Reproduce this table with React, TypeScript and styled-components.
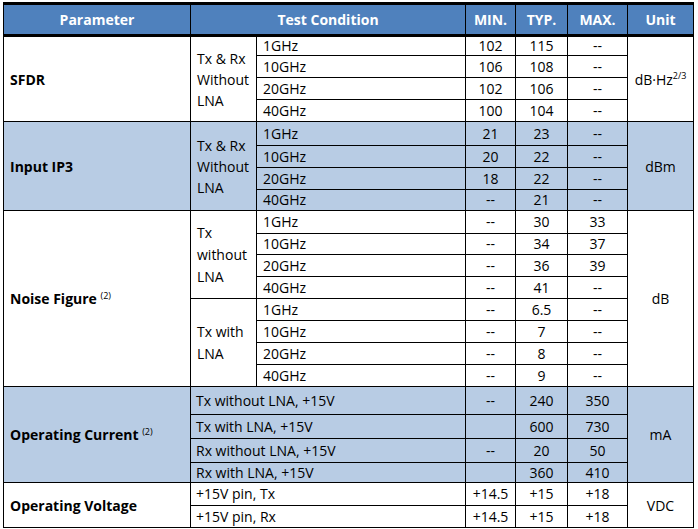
import React from "react"
import styled, { createGlobalStyle } from "styled-components"

const HEAD_BLUE = "#4f81bd"
const BAND_BLUE = "#b8cce4"

const GlobalStyle = createGlobalStyle`
  html, body {
    margin: 0;
    padding: 0;
    background: #fff;
  }
  body {
    font-family: "Open Sans", "Noto Sans", sans-serif;
    color: #000;
  }
`

const S = {
  Table: styled.table`
    margin: 2px 0 0 3px;
    width: 690px;
    table-layout: fixed;
    border-collapse: collapse;
    font-size: 14px;
    border: 1px solid #000;
    border-top: 3px solid #000;
  `,
  Row: styled.tr<{ $h: number; $band?: boolean }>`
    height: ${({ $h }) => $h}px;
    background: ${({ $band }) => ($band ? BAND_BLUE : "#fff")};
  `,
  Head: styled.th`
    background: ${HEAD_BLUE};
    color: #fff;
    font-weight: 700;
    text-align: center;
    padding: 0;
    border: 1px solid #000;
    border-top: 3px solid #000;
    border-bottom: 3px solid #000;
  `,
  Param: styled.td`
    font-weight: 700;
    text-align: left;
    padding: 0 6px;
    border: 1px solid #000;
    white-space: nowrap;
  `,
  Label: styled.td<{ $lh: number }>`
    text-align: left;
    padding: 0 6px;
    line-height: ${({ $lh }) => $lh}px;
    border: 1px solid #000;
  `,
  Freq: styled.td`
    text-align: left;
    padding: 0 6px;
    border: 1px solid #000;
    line-height: 18px;
  `,
  Cond: styled.td`
    text-align: left;
    padding: 0 5px;
    border: 1px solid #000;
    white-space: nowrap;
    line-height: 18px;
  `,
  Value: styled.td`
    text-align: center;
    padding: 0;
    border: 1px solid #000;
    line-height: 18px;
  `,
  Unit: styled.td`
    text-align: center;
    padding: 0;
    border: 1px solid #000;
  `,
  Sup: styled.sup`
    font-size: 9px;
    vertical-align: 6px;
    line-height: 0;
  `,
  Note: styled.sup`
    font-size: 9px;
    font-weight: 400;
    vertical-align: 5px;
    line-height: 0;
  `,
}

type Vals = [string, string, string]

interface FreqRow {
  f: string
  v: Vals
  h: number
}

interface FreqGroup {
  label: string[]
  lh: number
  rows: FreqRow[]
}

interface FreqSection {
  param: React.ReactNode
  unit: React.ReactNode
  band: boolean
  groups: FreqGroup[]
}

interface CondRow {
  cond: string
  v: Vals
  h: number
}

interface CondSection {
  param: React.ReactNode
  unit: React.ReactNode
  band: boolean
  rows: CondRow[]
}

const txRxNoLna = ["Tx & Rx", "Without", "LNA"]

const freqSections: FreqSection[] = [
  {
    param: "SFDR",
    unit: (
      <>
        dB·Hz<S.Sup>2/3</S.Sup>
      </>
    ),
    band: false,
    groups: [
      {
        label: txRxNoLna,
        lh: 21,
        rows: [
          { f: "1GHz", v: ["102", "115", "--"], h: 19 },
          { f: "10GHz", v: ["106", "108", "--"], h: 22 },
          { f: "20GHz", v: ["102", "106", "--"], h: 22 },
          { f: "40GHz", v: ["100", "104", "--"], h: 22 },
        ],
      },
    ],
  },
  {
    param: "Input IP3",
    unit: "dBm",
    band: true,
    groups: [
      {
        label: txRxNoLna,
        lh: 21,
        rows: [
          { f: "1GHz", v: ["21", "23", "--"], h: 24 },
          { f: "10GHz", v: ["20", "22", "--"], h: 22 },
          { f: "20GHz", v: ["18", "22", "--"], h: 22 },
          { f: "40GHz", v: ["--", "21", "--"], h: 21 },
        ],
      },
    ],
  },
  {
    param: (
      <>
        Noise Figure <S.Note>(2)</S.Note>
      </>
    ),
    unit: "dB",
    band: false,
    groups: [
      {
        label: ["Tx", "without", "LNA"],
        lh: 22,
        rows: [
          { f: "1GHz", v: ["--", "30", "33"], h: 23 },
          { f: "10GHz", v: ["--", "34", "37"], h: 21 },
          { f: "20GHz", v: ["--", "36", "39"], h: 22 },
          { f: "40GHz", v: ["--", "41", "--"], h: 22 },
        ],
      },
      {
        label: ["Tx with", "LNA"],
        lh: 22,
        rows: [
          { f: "1GHz", v: ["--", "6.5", "--"], h: 22 },
          { f: "10GHz", v: ["--", "7", "--"], h: 22 },
          { f: "20GHz", v: ["--", "8", "--"], h: 22 },
          { f: "40GHz", v: ["--", "9", "--"], h: 22 },
        ],
      },
    ],
  },
]

const condSections: CondSection[] = [
  {
    param: (
      <>
        Operating Current <S.Note>(2)</S.Note>
      </>
    ),
    unit: "mA",
    band: true,
    rows: [
      { cond: "Tx without LNA, +15V", v: ["--", "240", "350"], h: 28 },
      { cond: "Tx with LNA, +15V", v: ["", "600", "730"], h: 24 },
      { cond: "Rx without LNA, +15V", v: ["--", "20", "50"], h: 24 },
      { cond: "Rx with LNA, +15V", v: ["", "360", "410"], h: 20 },
    ],
  },
  {
    param: "Operating Voltage",
    unit: "VDC",
    band: false,
    rows: [
      { cond: "+15V pin, Tx", v: ["+14.5", "+15", "+18"], h: 23 },
      { cond: "+15V pin, Rx", v: ["+14.5", "+15", "+18"], h: 22 },
    ],
  },
]

const colWidths = [187, 66, 209, 50, 52, 60, 66]

export default function App() {
  return (
    <>
      <GlobalStyle />
      <S.Table>
        <colgroup>
          {colWidths.map((w, i) => (
            <col key={i} style={{ width: w }} />
          ))}
        </colgroup>
        <thead>
          <S.Row $h={32}>
            <S.Head>Parameter</S.Head>
            <S.Head colSpan={2}>Test Condition</S.Head>
            <S.Head>MIN.</S.Head>
            <S.Head>TYP.</S.Head>
            <S.Head>MAX.</S.Head>
            <S.Head>Unit</S.Head>
          </S.Row>
        </thead>
        <tbody>
          {freqSections.map((sec, si) => {
            const total = sec.groups.reduce((n, g) => n + g.rows.length, 0)
            return sec.groups.flatMap((g, gi) =>
              g.rows.map((r, ri) => (
                <S.Row key={`${si}-${gi}-${ri}`} $h={r.h} $band={sec.band}>
                  {gi === 0 && ri === 0 && <S.Param rowSpan={total}>{sec.param}</S.Param>}
                  {ri === 0 && (
                    <S.Label rowSpan={g.rows.length} $lh={g.lh}>
                      {g.label.map((l, li) => (
                        <div key={li}>{l}</div>
                      ))}
                    </S.Label>
                  )}
                  <S.Freq>{r.f}</S.Freq>
                  {r.v.map((v, vi) => (
                    <S.Value key={vi}>{v}</S.Value>
                  ))}
                  {gi === 0 && ri === 0 && <S.Unit rowSpan={total}>{sec.unit}</S.Unit>}
                </S.Row>
              ))
            )
          })}
          {condSections.map((sec, si) =>
            sec.rows.map((r, ri) => (
              <S.Row key={`c${si}-${ri}`} $h={r.h} $band={sec.band}>
                {ri === 0 && <S.Param rowSpan={sec.rows.length}>{sec.param}</S.Param>}
                <S.Cond colSpan={2}>{r.cond}</S.Cond>
                {r.v.map((v, vi) => (
                  <S.Value key={vi}>{v}</S.Value>
                ))}
                {ri === 0 && <S.Unit rowSpan={sec.rows.length}>{sec.unit}</S.Unit>}
              </S.Row>
            ))
          )}
        </tbody>
      </S.Table>
    </>
  )
}
